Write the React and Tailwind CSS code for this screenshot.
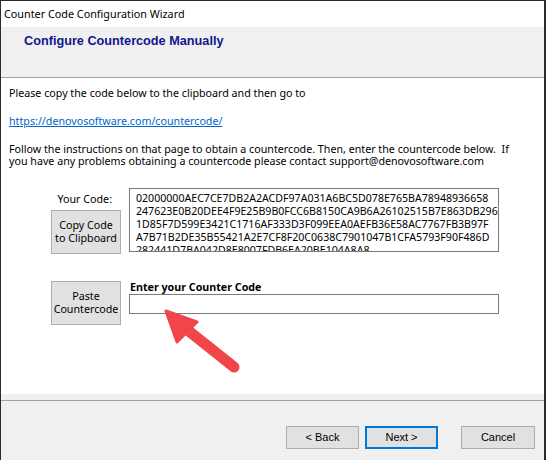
import React from 'react';

const ui = { fontFamily: '"Noto Sans", "Open Sans", sans-serif' };
const ms = { fontFamily: '"Liberation Sans", Arial, sans-serif' };

const codeLines = [
  '02000000AEC7CE7DB2A2ACDF97A031A6BC5D078E765BA78948936658',
  '247623E0B20DEE4F9E25B9B0FCC6B8150CA9B6A26102515B7E863DB296',
  '1D85F7D599E3421C1716AF333D3F099EEA0AEFB36E58AC7767FB3B97F',
  'A7B71B2DE35B55421A2E7CF8F20C0638C7901047B1CFA5793F90F486D',
  '282441D7BA042D8E8007FDB6EA20BE104A8A8',
];

// Classic WinForms push button
const WinButton = ({ children, focused = false, className = '' }) => (
  <button
    className={`bg-[#e1e1e1] text-black flex items-center justify-center ${
      focused ? 'border-2 border-[#0078d7]' : 'border border-[#adadad]'
    } ${className}`}
  >
    {children}
  </button>
);

// Red annotation arrow drawn over the dialog
const Arrow = () => (
  <svg className="absolute left-0 top-0 pointer-events-none" width="546" height="460" viewBox="0 0 546 460">
    <line x1="233" y1="366" x2="184" y2="327" stroke="#f0454a" strokeWidth="11" strokeLinecap="round" />
    <polygon points="165,310 196,321 176,341" fill="#f0454a" stroke="#f0454a" strokeWidth="3" strokeLinejoin="round" />
  </svg>
);

export default function App() {
  return (
    <div className="relative w-[546px] h-[460px] flex flex-col bg-white border-t border-l border-r-2 border-[#2b2b2b] overflow-hidden">
      {/* Title bar */}
      <div className="h-[26px] flex items-center pl-[3px] text-[10.8px] text-black" style={ui}>
        Counter Code Configuration Wizard
      </div>

      {/* Header */}
      <div className="h-[51px] bg-[#f0f0f0] border-b border-[#a0a0a0] pl-[23px] pt-[6px]">
        <div className="text-[12.7px] font-bold text-[#14148c] leading-[16px]" style={ms}>
          Configure Countercode Manually
        </div>
      </div>

      {/* Body */}
      <div className="h-[316px] bg-white pl-[8px] pt-[9px] text-[10.7px] leading-[13px] text-black" style={ui}>
        <p>Please copy the code below to the clipboard and then go to</p>
        <p className="mt-[15px] text-[#0066cc] underline">https://denovosoftware.com/countercode/</p>
        <p className="mt-[15px] w-[520px] leading-[12px]">
          Follow the instructions on that page to obtain a countercode. Then, enter the countercode below.&nbsp; If you have any problems obtaining a countercode please contact support@denovosoftware.com
        </p>

        <div className="mt-[21px] ml-[42px] flex gap-[8px]">
          <div className="w-[70px] flex flex-col">
            <div className="text-right pr-[9px] mt-[5px] h-[13px]">Your Code:</div>
            <WinButton className="mt-[4px] h-[44px] w-[70px] flex-col leading-[13px]">
              <span>Copy Code</span>
              <span>to Clipboard</span>
            </WinButton>
          </div>
          <div className="w-[370px] h-[64px] border border-[#7a7a7a] overflow-hidden pl-[6px] pt-[3px] text-[10.6px] leading-[13px]">
            {codeLines.map((l) => (
              <div key={l} className="whitespace-nowrap">{l}</div>
            ))}
          </div>
        </div>

        <div className="mt-[27px] ml-[42px] flex gap-[8px]">
          <WinButton className="h-[44px] w-[70px] flex-col leading-[13px]">
            <span>Paste</span>
            <span>Countercode</span>
          </WinButton>
          <div className="w-[370px] flex flex-col">
            <div className="font-bold pl-[1px] h-[13px]">Enter your Counter Code</div>
            <div className="h-[20px] border border-[#7a7a7a] bg-white"></div>
          </div>
        </div>
      </div>

      {/* Footer */}
      <div className="flex-1 bg-[#f0f0f0] pt-[6px]">
        <div className="border-t border-[#a0a0a0] flex justify-end pt-[25px] pr-[9px] text-[11px]" style={ms}>
          <WinButton className="w-[73px] h-[23px]">&lt; Back</WinButton>
          <WinButton focused className="w-[73px] h-[23px] ml-[6px]">Next &gt;</WinButton>
          <WinButton className="w-[74px] h-[23px] ml-[23px]">Cancel</WinButton>
        </div>
      </div>

      <Arrow />
    </div>
  );
}
